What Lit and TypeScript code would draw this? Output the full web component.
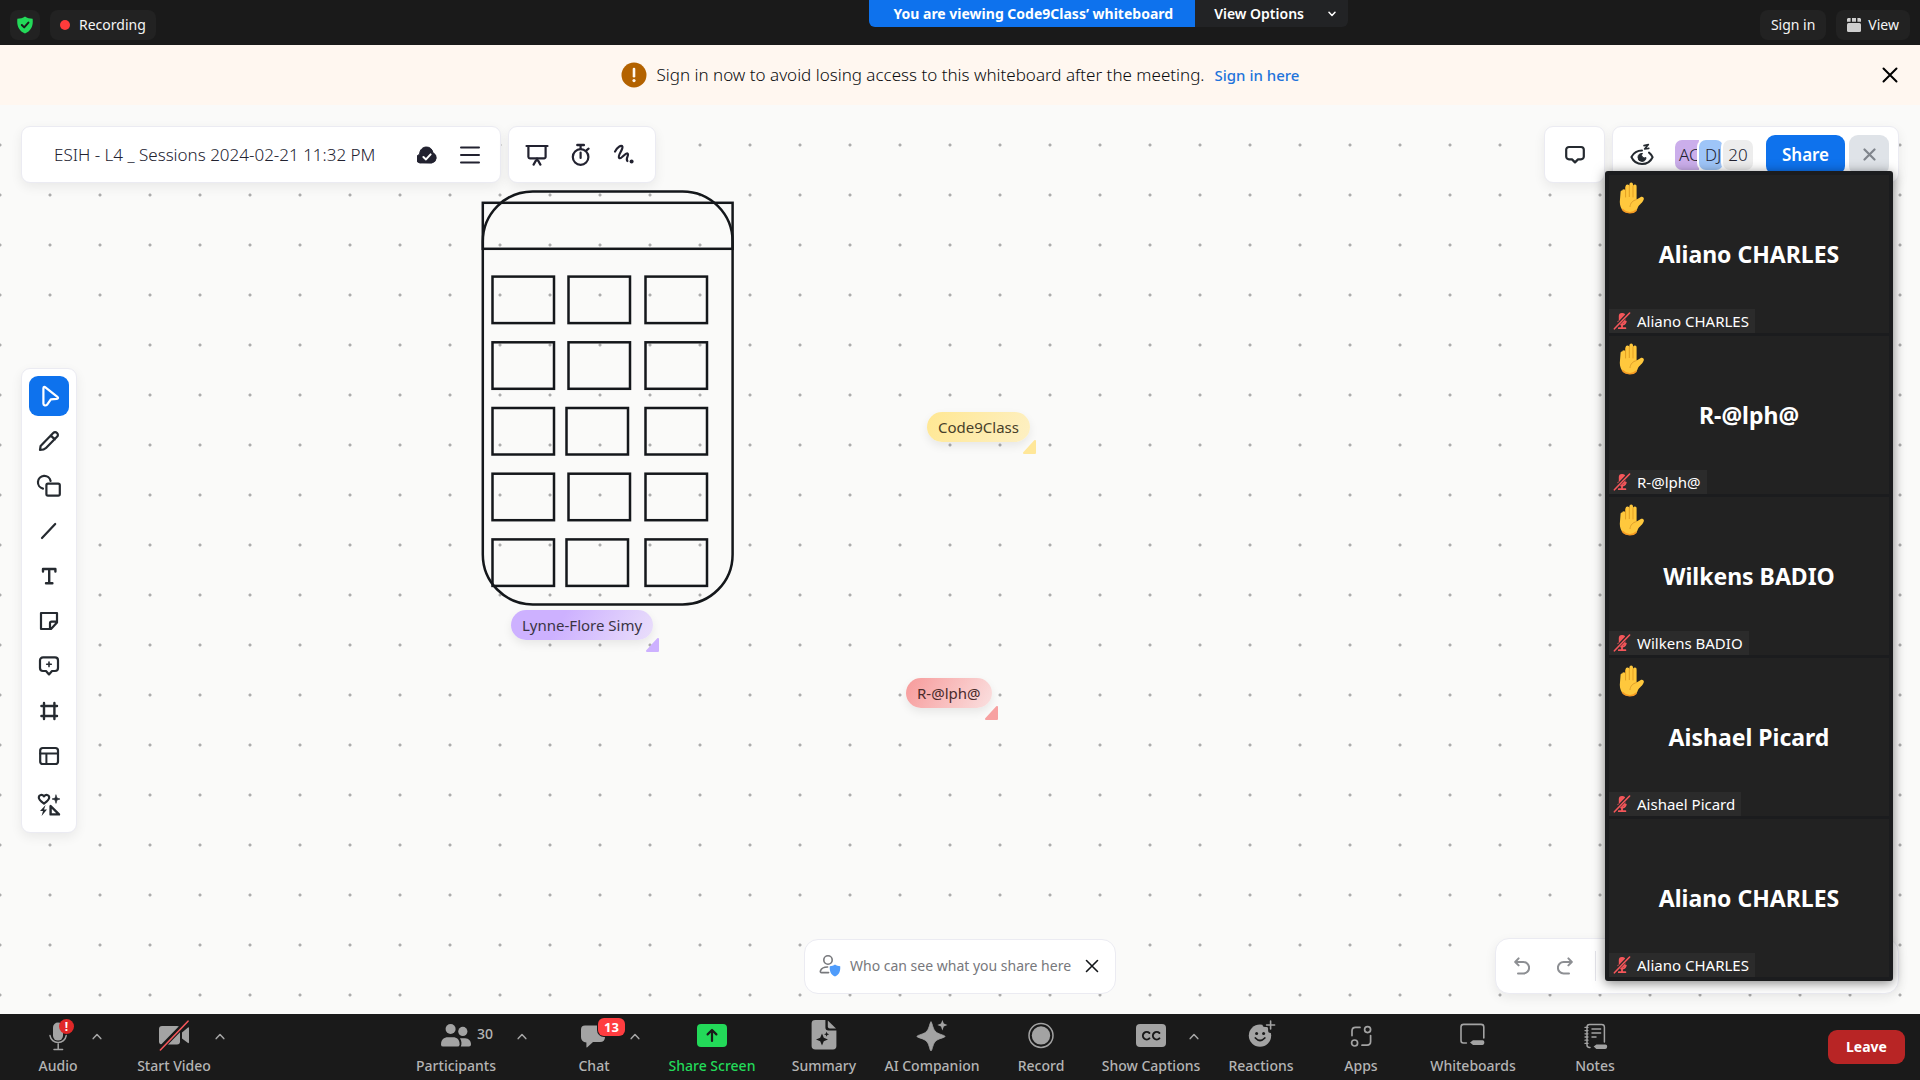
import { LitElement, html, css, svg, nothing, TemplateResult, SVGTemplateResult } from "lit";
import { customElement, property } from "lit/decorators.js";
import { classMap } from "lit/directives/class-map.js";

/** Wraps icon strokes in an svg element of the given size. */
const icon = (w: number, h: number, body: SVGTemplateResult, cls = ""): TemplateResult => html`<svg
  class="icon ${cls}" width=${w} height=${h} viewBox="0 0 ${w} ${h}" fill="none"
  stroke-linecap="round" stroke-linejoin="round" aria-hidden="true">${body}</svg>`;

const shield = icon(16, 18, svg`
  <path d="M8 .5 C10 2 13 2.6 15.6 2.8 C16.4 9 14.6 14.6 8 17.6 C1.4 14.6 -.4 9 .4 2.8 C3 2.6 6 2 8 .5Z" fill="#23d959"/>
  <path d="M4.8 9 L7.2 11.4 L11.4 6.6" stroke="#1a1a1a" stroke-width="2"/>`);

const viewGrid = icon(14, 14, svg`
  <rect x="0" y="5" width="14" height="9" rx="1.5" fill="#cfcfcf"/>
  <path d="M1 0H3.6V3.8H0V1Z M5 0H9V3.8H5Z M10.4 0H13L14 1V3.8H10.4Z" fill="#cfcfcf"/>`);

const chevronDown = icon(8, 6, svg`<path d="M1 1.2 L4 4.4 L7 1.2" stroke="#fff" stroke-width="1.5"/>`);
const caretUp = icon(10, 7, svg`<path d="M1.2 5.6 L5 1.6 L8.8 5.6" stroke="#a6a6a6" stroke-width="1.5"/>`);

const warning = icon(26, 26, svg`
  <circle cx="13" cy="13" r="12.5" fill="#b36200"/>
  <path d="M13 7V14.2" stroke="#fff8f0" stroke-width="2.6"/>
  <circle cx="13" cy="18.6" r="1.6" fill="#fff8f0"/>`);

const cross = (size: number, colour: string, width: number) => icon(size, size, svg`
  <path d="M1.5 1.5 L${size - 1.5} ${size - 1.5} M${size - 1.5} 1.5 L1.5 ${size - 1.5}" stroke=${colour} stroke-width=${width}/>`);

const cloud = icon(20, 18, svg`
  <path d="M4.6 17 A4.4 4.4 0 0 1 2.6 8.4 C2.6 3.6 6 1 9.4 1 C12.6 1 15.4 3 16 6.8 A5.4 5.4 0 0 1 15 17Z" fill="#222230" stroke="#222230"/>
  <path d="M6.4 11 L9 13.4 L13.6 8.4" stroke="#fff" stroke-width="2"/>`);

const burger = icon(20, 18, svg`<path d="M1 1.5H19 M1 9H19 M1 16.5H19" stroke="#222230" stroke-width="2"/>`);

const present = icon(24, 22, svg`
  <g stroke="#222230" stroke-width="2.2">
    <path d="M1.5 2H22.5"/><path d="M3.4 2V13 A1.5 1.5 0 0 0 4.9 14.4H19 A1.5 1.5 0 0 0 20.6 13V2"/>
    <path d="M12 14.6V16.4 M8.6 20.6 L11 16.4H13 L15.4 20.6"/>
  </g>`);

const timer = icon(20, 24, svg`
  <g stroke="#222230" stroke-width="2.2">
    <circle cx="9.6" cy="14" r="7.8"/><path d="M6.4 2H12.8" stroke-width="2.6"/><path d="M9.6 3V6 M9.6 9.6V15 M15.4 7.4 L17.6 5.6"/>
  </g>`);

const laser = icon(22, 22, svg`
  <path d="M2 7.6 C4 3.4 8.6 .4 9.4 2.6 C10.4 5.4 4 11.6 6.2 14 C8.2 16 12.6 8 14.6 9.6 C16.4 11 12.2 14.6 14.4 17" stroke="#222230" stroke-width="2.2"/>
  <circle cx="18.6" cy="17.6" r="2" fill="#222230"/>`);

const comment = icon(20, 20, svg`
  <path d="M4 2H16 A2.8 2.8 0 0 1 18.8 4.8V11.6 A2.8 2.8 0 0 1 16 14.4H13 L10 17.4 L7 14.4H4 A2.8 2.8 0 0 1 1.2 11.6V4.8 A2.8 2.8 0 0 1 4 2Z" stroke="#252a30" stroke-width="2.2"/>`);

const eye = icon(24, 24, svg`
  <path d="M12 7.6 C7.2 7.6 3.4 10.4 1.4 14 C3.4 18.4 7.4 21 12 21 C16.6 21 20.6 18.4 22.6 14.2 C21.6 12 20.4 10.6 19 9.6" stroke="#252a30" stroke-width="2"/>
  <path d="M12 10.4 A4 4 0 1 0 16 14.6 A3 3 0 0 1 12 10.4Z" fill="#252a30" stroke="#252a30"/>
  <path d="M14 2.6 L18.4 1.6 L14.6 6 L18.8 5.4" stroke="#252a30" stroke-width="1.6"/>`);

const ink = "#252a30";
const tools: { name: string; glyph: TemplateResult }[] = [
  { name: "Select", glyph: icon(24, 24, svg`
    <path d="M6.4 4.4 C6.4 3 7.4 2.6 8.4 3.4 L20.4 12.8 C21.6 13.8 21 14.8 19.8 14.9 L13.8 15.4 L10 20.8 C8.8 22 6.4 21.6 6.4 19.8Z" stroke="#fff" stroke-width="2.2"/>`) },
  { name: "Pen", glyph: icon(24, 24, svg`
    <path d="M3 21 L3.6 17 L16.2 4 C17.4 2.8 18.8 2.8 20 4 C21.2 5.2 21.2 6.6 20 7.8 L9 19 C7.4 20.6 5.6 21 3 21Z M13.6 6.4 L17.8 10.4" stroke=${ink} stroke-width="2.2"/>`) },
  { name: "Shapes", glyph: icon(26, 24, svg`
    <path d="M7 14.6 A6.4 6.4 0 1 1 14.6 7" stroke=${ink} stroke-width="2.2"/>
    <rect x="10.4" y="9.6" width="13.4" height="12" rx="1.6" stroke=${ink} stroke-width="2.2"/>`) },
  { name: "Line", glyph: icon(24, 24, svg`<path d="M5 19 L18.2 5" stroke=${ink} stroke-width="2.2"/>`) },
  { name: "Text", glyph: icon(24, 24, svg`<path d="M6 7.6V5H18.4V7.6 M12.2 5V19.2 M9 19.2H15.4" stroke=${ink} stroke-width="2.4"/>`) },
  { name: "Sticky note", glyph: icon(24, 24, svg`
    <path d="M4 4H20V13.4 L14 20H4Z M20 12.6H14.6 A1.6 1.6 0 0 0 13 14.2V19.4" stroke=${ink} stroke-width="2.2"/>`) },
  { name: "Comment", glyph: icon(24, 24, svg`
    <path d="M6 3.4H18 A3 3 0 0 1 21 6.4V14 A3 3 0 0 1 18 17H15 L12 20.4 L9 17H6 A3 3 0 0 1 3 14V6.4 A3 3 0 0 1 6 3.4Z" stroke=${ink} stroke-width="2.2"/>
    <path d="M12 8V12.6 M9.7 10.3H14.3" stroke=${ink} stroke-width="1.6"/>`) },
  { name: "Frame", glyph: icon(24, 24, svg`<path d="M7 4V20 M17.4 4V20 M4.4 7H20 M4.4 17H20" stroke=${ink} stroke-width="2.4"/>`) },
  { name: "Table", glyph: icon(24, 24, svg`
    <rect x="3.2" y="4" width="17.8" height="16" rx="2.6" stroke=${ink} stroke-width="2.2"/>
    <path d="M3.2 9.4H21 M9.4 9.4V20" stroke=${ink} stroke-width="2"/>`) },
  { name: "More", glyph: icon(26, 26, svg`
    <path d="M8 11.6 C5 9.6 2.6 7.8 2.8 5.2 C3 2.8 6.2 2 8 4.4 C9.8 2 13 2.8 13.2 5.2 C13.4 7.8 11 9.6 8 11.6Z" stroke=${ink} stroke-width="2.2"/>
    <path d="M20 3 L21 6 L24 7 L21 8 L20 11.4 L19 8 L16 7 L19 6Z" fill=${ink} stroke=${ink} stroke-width=".6"/>
    <path d="M9.6 13 L4 19 H7 L5.6 24 L11 17.6H8Z" fill=${ink}/>
    <path d="M14.6 14 V22.4 H23Z" stroke=${ink} stroke-width="2.4"/>`) },
];

const undo = icon(16, 18, svg`<path d="M4.6 1.4 L1.2 5 L4.6 8.4 M1.6 5H9.4 A5.4 5.4 0 0 1 9.4 16.4H4" stroke="#8d8f93" stroke-width="2"/>`);
const redo = icon(16, 18, svg`<path d="M11.4 1.4 L14.8 5 L11.4 8.4 M14.4 5H6.6 A5.4 5.4 0 0 0 6.6 16.4H12" stroke="#8d8f93" stroke-width="2"/>`);

const privacy = icon(22, 24, svg`
  <circle cx="9" cy="6" r="4.2" stroke="#77787c" stroke-width="1.6"/>
  <path d="M9.6 18.6H2.6 C1.4 18.6 1.2 17.8 1.4 17 C2.2 14.4 4.6 13 8.6 13" stroke="#77787c" stroke-width="1.6"/>
  <path d="M16 10.4 C17.4 11.6 19.4 12 21.2 12.2 C21.6 16.8 20.4 20.6 16 22.4 C11.6 20.6 10.4 16.8 10.8 12.2 C12.6 12 14.6 11.6 16 10.4Z" fill="#4f9cfb"/>`);

const hand = icon(26, 32, svg`
  <path d="M3 9 A1.8 1.8 0 0 1 6.6 9V4.4 A1.9 1.9 0 0 1 10.4 4.2 V2.4 A1.8 1.8 0 0 1 14 2.4V4 A1.8 1.8 0 0 1 17.6 4.4V17.6 L21.4 15.2 C23 14.2 25.4 15.2 24.8 17.2 C23.6 21 20.4 22.2 18.8 25.4 C17.4 29.4 15.2 31 11 31 C5.6 31 1 28 .8 20 L1.6 9.4 A1.4 1.4 0 0 1 3 8.4Z" fill="#ffc83d"/>
  <path d="M6.6 5V15 M10.3 4V14.6 M14 4V15" stroke="#e39f22" stroke-width="1"/>
  <path d="M17.4 17.6 C13.4 18.6 11.4 21 11 24.6" stroke="#e0a02a" stroke-width="1"/>
  <path d="M3.6 27.6 C7 31.6 14 31.6 17 28.4" stroke="#f59a23" stroke-width="1.6"/>`);

const mutedMic = icon(18, 18, svg`
  <rect x="5.8" y="1" width="6.6" height="10.6" rx="3" fill="#f5565a"/>
  <path d="M9 11V15.6 M5.8 16.2H12.4" stroke="#f5565a" stroke-width="1.8"/>
  <path d="M5.4 9.6 A3.8 3.8 0 0 0 12.8 9.6" stroke="#f5565a" stroke-width="1.8"/>
  <path d="M1.2 16.4 L16 1" stroke="#2b2b2b" stroke-width="3.4"/>
  <path d="M1.4 16.8 L16.6 1" stroke="#f5565a" stroke-width="1.6"/>`);

const g = "#a3a3a3";
const bar = {
  audio: icon(32, 34, svg`
    <rect x="11" y="5.6" width="10" height="18" rx="5" fill=${g}/>
    <path d="M8 18.6 A8.2 8.2 0 0 0 24.2 18.6 M16.2 27V32 M12 32.4H20.6" stroke=${g} stroke-width="1.5"/>`),
  video: icon(32, 34, svg`
    <rect x="1" y="9" width="21" height="18.6" rx="3" fill=${g}/>
    <path d="M24 15.4 L30 10.4 Q31 10 31 11.4V25 Q31 26.6 30 26 L24 21.4Z" fill=${g}/>
    <path d="M1.6 32.6 L30 3.6" stroke="#1a1a1a" stroke-width="5"/>
    <path d="M2.4 33 L30 4.2" stroke="#f5565a" stroke-width="1.6"/>`),
  people: icon(32, 34, svg`
    <circle cx="10.6" cy="12" r="5" fill=${g}/><circle cx="22.8" cy="14.4" r="4.6" fill=${g}/>
    <path d="M1 27.4 C1 22.6 4 20.2 8 20.2H13 C17 20.2 19.6 22.6 19.6 27.4 Q19.6 29.6 17.4 29.6H3.2 Q1 29.6 1 27.4Z" fill=${g}/>
    <path d="M20 21.2 H25 C29 21.4 31 24 31 27.6 Q31 29.6 29 29.6H20.8 C21.8 27 21.8 24 20 21.2Z" fill=${g}/>`),
  chat: icon(32, 34, svg`
    <path d="M7 8.4H22 Q27 8.4 27 13.4V20 Q27 25 22 25H15 L9 30.4 Q8.4 30.8 8.4 29.8V25.4 Q3 25 3 20V12.4 Q3 8.4 7 8.4Z" fill=${g}/>`),
  share: icon(32, 34, svg`
    <rect x="1" y="7" width="30" height="23" rx="4" fill="#23d959"/>
    <path d="M16 24V13.4 M11.6 17.4 L16 13 L20.4 17.4" stroke="#1a1a1a" stroke-width="2.2"/>`),
  summary: icon(32, 34, svg`
    <path d="M7.4 3H17.4 V10.4 Q17.4 13.4 20.4 13.4H28.4V29 Q28.4 32.4 25 32.4H7.4 Q3.6 32.4 3.6 29V6.4 Q3.6 3 7.4 3Z" fill=${g}/>
    <path d="M19.8 3.6 L28 11.4H21.8 Q19.8 11.4 19.8 9.4Z" fill=${g}/>
    <path d="M14 16.6 L15.8 20.8 L20 22.4 L15.8 24.2 L14 28.4 L12.2 24.2 L8 22.4 L12.2 20.8Z" fill="#1a1a1a"/>
    <path d="M18.6 14.6 L19.3 16.5 L21.2 17.2 L19.3 18 L18.6 19.8 L17.9 18 L16 17.2 L17.9 16.5Z" fill="#1a1a1a"/>`),
  companion: icon(32, 34, svg`
    <path d="M15 5 C16.2 5 16.4 10.6 19 14 C21.6 17.4 29 18 29 19.4 C29 20.8 21.6 21.4 19 24.8 C16.4 28.2 16.2 33.8 15 33.8 C13.8 33.8 13.6 28.2 11 24.8 C8.4 21.4 1 20.8 1 19.4 C1 18 8.4 17.4 11 14 C13.6 10.6 13.8 5 15 5Z" fill=${g} stroke=${g} stroke-width=".8"/>
    <path d="M26.4 3 L27.8 6.6 L31.4 8 L27.8 9.4 L26.4 13.4 L25 9.4 L21.4 8 L25 6.6Z" fill=${g}/>`),
  record: icon(32, 34, svg`
    <circle cx="16" cy="18.4" r="12" stroke=${g} stroke-width="1.5"/><circle cx="16" cy="18.4" r="9.2" fill=${g}/>`),
  captions: icon(32, 34, svg`
    <rect x="1" y="7" width="30" height="23" rx="4" fill=${g}/>
    <path d="M14.4 16 A3.8 3.8 0 1 0 14.4 21.4 M24.4 16 A3.8 3.8 0 1 0 24.4 21.4" stroke="#1a1a1a" stroke-width="2"/>`),
  reactions: icon(32, 34, svg`
    <circle cx="15" cy="18.6" r="11.2" fill=${g}/>
    <path d="M25.6 2V13.4 M20 7.6H31.4" stroke="#1a1a1a" stroke-width="5"/>
    <path d="M25.6 4V12 M21.6 8H29.6" stroke=${g} stroke-width="1.6"/>
    <circle cx="11.6" cy="16.4" r="1.5" fill="#1a1a1a"/><circle cx="18.6" cy="16.4" r="1.5" fill="#1a1a1a"/>
    <path d="M10.4 21 Q15 26 19.8 21" stroke="#1a1a1a" stroke-width="1.8"/>`),
  apps: icon(32, 34, svg`
    <g stroke=${g} stroke-width="1.7">
      <path d="M7 18.6V14 Q7 10.4 10.6 10.4H15"/><path d="M25.6 18.6V24.6 Q25.6 28.2 22 28.2H17"/>
      <circle cx="22.6" cy="12.6" r="3"/><circle cx="9.6" cy="26" r="3"/>
    </g>`),
  whiteboards: icon(32, 34, svg`
    <path d="M9.4 26H6.4 Q4 26 4 23.6V10 Q4 7.4 6.6 7.4H24 Q26.8 7.4 26.8 10V21" stroke=${g} stroke-width="1.6"/>
    <path d="M13 25.4 L16 23.2H25.6 Q27.4 23.2 27.4 25.6 Q27.4 28 25.6 28H16Z" fill=${g}/>`),
  notes: icon(32, 34, svg`
    <path d="M11 30.4H10.4 Q8 30.4 8 28V10 Q8 7.4 10.6 7.4H22.6 Q25.4 7.4 25.4 10V25" stroke=${g} stroke-width="1.5"/>
    <path d="M6 10.4H9 M6 13.6H9 M6 16.8H9 M6 20H9 M6 23.2H9 M6 26.4H9" stroke=${g} stroke-width="1.3"/>
    <path d="M13 12H21.6 M13 16H21.6 M13 20H17" stroke=${g} stroke-width="1.5"/>
    <path d="M14.6 29.6 L17.4 27.4H26.4 Q28.2 27.4 28.2 29.6 Q28.2 32 26.4 32H17.4Z" fill=${g}/>`),
};

type Action = {
  label: string; glyph: TemplateResult; size: string;
  caret?: "near" | "edge"; count?: string; alert?: string; badge?: string; accent?: boolean;
};

const leftActions: Action[] = [
  { label: "Audio", glyph: bar.audio, size: "w116", caret: "near", alert: "!" },
  { label: "Start Video", glyph: bar.video, size: "w116", caret: "edge" },
];
const centreActions: Action[] = [
  { label: "Participants", glyph: bar.people, size: "w156", caret: "edge", count: "30" },
  { label: "Chat", glyph: bar.chat, size: "w120", caret: "near", badge: "13" },
  { label: "Share Screen", glyph: bar.share, size: "w116", accent: true },
  { label: "Summary", glyph: bar.summary, size: "w108" },
  { label: "AI Companion", glyph: bar.companion, size: "w108" },
  { label: "Record", glyph: bar.record, size: "w110" },
  { label: "Show Captions", glyph: bar.captions, size: "w110", caret: "edge" },
  { label: "Reactions", glyph: bar.reactions, size: "w110" },
  { label: "Apps", glyph: bar.apps, size: "w90" },
  { label: "Whiteboards", glyph: bar.whiteboards, size: "w134" },
  { label: "Notes", glyph: bar.notes, size: "w110" },
];

const people = [
  { name: "Aliano CHARLES", raised: true },
  { name: "R-@lph@", raised: true },
  { name: "Wilkens BADIO", raised: true },
  { name: "Aishael Picard", raised: true },
  { name: "Aliano CHARLES", raised: false },
];

const cursors = [
  { name: "Code9Class", kind: "yellow" },
  { name: "Lynne-Flore Simy", kind: "purple" },
  { name: "R-@lph@", kind: "red" },
];

/** Left edges of the keypad cells, row by row, inside the drawing. */
const keypad = [
  [11, 87, 164], [11, 87, 164], [11, 85, 164], [11, 87, 164], [11, 85, 164],
];

@customElement("participant-tile")
export class ParticipantTile extends LitElement {
  @property() name = "";
  @property({ type: Boolean }) raised = false;

  static styles = css`
    :host { display: grid; height: 158px; background: #222; color: #fff; }
    .name, .hand, .tag { grid-area: 1 / 1; }
    .name { place-self: center; font-size: 23px; line-height: 32px; font-weight: 700; }
    .hand { padding: 7px 10px; }
    .tag {
      place-self: end start; display: flex; align-items: center; gap: 6px;
      height: 24px; padding: 0 6px 0 4px; background: #2b2b2b; font-size: 15px; line-height: 24px;
    }
    .icon { display: block; }
  `;

  render() {
    return html`
      ${this.raised ? html`<div class="hand" role="img" aria-label="Hand raised">${hand}</div>` : nothing}
      <div class="name">${this.name}</div>
      <div class="tag">${mutedMic}<span>${this.name}</span></div>
    `;
  }
}

@customElement("app-root")
export class AppRoot extends LitElement {
  static styles = css`
    :host {
      display: flex; flex-direction: column; min-height: 100vh; position: relative;
      font-family: "Noto Sans", "Open Sans", sans-serif; font-size: 14px; line-height: 20px;
      background: #fafaf9; color: #222230;
    }
    * { box-sizing: border-box; }
    button { font: inherit; color: inherit; border: 0; padding: 0; margin: 0; background: none; }
    h1 { margin: 0; font-weight: 400; }
    .icon { display: block; flex: none; }

    .top { display: grid; grid-template-columns: 38fr auto 25fr; height: 45px; background: #1a1a1a; color: #f5f5f5; }
    .top-side { display: flex; align-items: center; gap: 10px; padding: 5px 10px 0; }
    .top-end { justify-content: flex-end; }
    .chip { display: flex; align-items: center; gap: 7px; height: 30px; padding: 0 11px; border-radius: 8px; background: #222; }
    .chip-shield { padding: 0 7px; }
    .dot { width: 10px; height: 10px; border-radius: 50%; background: #ff3b3b; }
    .recording { padding: 0 10px; gap: 9px; }
    .viewing { display: flex; height: 27px; font-weight: 700; line-height: 27px; color: #fff; }
    .viewing-name { padding: 0 22px 0 24px; background: #0e72ed; border-bottom-left-radius: 6px; }
    .viewing-menu { display: flex; align-items: center; gap: 24px; padding: 0 12px 0 19px; font-weight: 600; background: #222325; border-bottom-right-radius: 6px; }

    .notice { display: grid; grid-template-columns: 1fr auto 1fr; align-items: center; height: 60px; background: #fff7f0; color: #0a0c0e; }
    .notice-body { grid-column: 2; display: flex; align-items: center; gap: 10px; font-size: 17px; line-height: 24px; font-weight: 300; }
    .notice-body a { font-size: 15px; font-weight: 500; color: #1f74db; text-decoration: none; }
    .notice-close { justify-self: end; padding: 8px 22px; }

    .board {
      flex: 1; position: relative; display: grid; grid-template-rows: auto 1fr auto; padding: 21px 21px 20px;
      background: radial-gradient(circle, #acacac 1px, transparent 2px) -25px 15px / 50px 50px, #fafaf9;
    }
    .panel { display: flex; align-items: center; background: #fff; border: 1px solid #ebebf2; border-radius: 9px; box-shadow: 0 4px 12px rgba(0, 0, 0, 0.07); z-index: 1; }
    .bar { display: flex; gap: 7px; }
    .bar .panel { height: 57px; }
    .title { padding: 0 20px 0 32px; gap: 21px; }
    .title h1 { font-size: 17px; line-height: 24px; font-weight: 300; width: 342px; }
    .title-icons { display: flex; align-items: center; gap: 23px; }
    .session { padding: 0 20px 0 16px; gap: 22px; }
    .spacer { flex: 1; }
    .comments { padding: 0 19px 0 20px; }
    .sharing { padding: 0 9px 0 17px; }
    .avatars { display: flex; padding: 0 13px 0 21px; font-size: 17px; line-height: 30px; font-weight: 300; }
    .avatar { width: 24px; height: 30px; padding-left: 4px; overflow: hidden; border-radius: 7px 0 0 7px; }
    .avatar-violet { background: #cbaeeb; }
    .avatar-blue { background: #9ec5f8; box-shadow: -1px 0 0 1px #fff; padding-left: 6px; border-radius: 7px; }
    .avatar-more { width: 30px; padding: 0; text-align: center; background: #ededed; box-shadow: -1px 0 0 1px #fff; border-radius: 7px; }
    .share { width: 79px; height: 40px; border-radius: 9px; background: #0e72ed; color: #fff; font-size: 17px; font-weight: 600; }
    .exit { display: grid; place-items: center; width: 40px; height: 40px; margin-left: 4px; border-radius: 9px; background: #dfe3e8; }

    .tools { flex-direction: column; gap: 5px; align-self: center; justify-self: start; margin-top: 80px; padding: 7px; }
    .tool { display: grid; place-items: center; width: 40px; height: 40px; border-radius: 9px; }
    .tool:last-child { margin-top: 4px; }
    .tool-active { background: #0e72ed; }

    .foot { display: grid; grid-template-columns: 1fr auto 1fr; align-items: center; }
    .hint { grid-column: 2; height: 55px; padding: 0 16px 0 14px; border-radius: 14px; box-shadow: none; color: #77787c; gap: 9px; }
    .hint button { padding: 0 0 0 5px; }
    .history { justify-self: end; width: 404px; height: 56px; border-radius: 14px; padding-left: 18px; gap: 27px; }
    .history .rule { width: 1px; height: 30px; margin-left: -5px; background: #e4e4ea; }

    .drawing { position: absolute; left: 480px; top: 84px; }
    .cursor { position: absolute; }
    .cursor-name { display: block; height: 30px; padding: 0 11px; border-radius: 15px; font-size: 15px; line-height: 30px; color: #3a3444; box-shadow: 0 4px 10px rgba(0, 0, 0, 0.08); }
    .cursor .icon { position: absolute; right: -7px; top: 28px; }
    .yellow { left: 927px; top: 307px; color: #ffe799; }
    .yellow .cursor-name { background: linear-gradient(120deg, #ffe792, #fdf0c4); color: #474029; }
    .purple { left: 511px; top: 505px; color: #cdb1ff; }
    .purple .cursor-name { background: linear-gradient(120deg, #cdb1ff 35%, #eadffb); }
    .red { left: 906px; top: 573px; color: #f7a1a1; }
    .red .cursor-name { background: linear-gradient(120deg, #f79a9a, #fae0e0); color: #4a2b2b; }

    .videos {
      position: absolute; z-index: 2; top: 171px; right: 27px; width: 288px; padding: 4px; display: grid; gap: 3px;
      background: #1b1c1e; border-radius: 3px; box-shadow: 0 2px 12px rgba(0, 0, 0, 0.5);
    }

    .controls { display: flex; height: 66px; background: #1a1a1a; color: #b4b4b4; }
    .controls-start { flex: 7; display: flex; }
    .controls-centre { display: flex; }
    .controls-end { flex: 5; display: flex; justify-content: flex-end; align-items: center; }
    .cell { display: grid; }
    .action, .caret { grid-area: 1 / 1; }
    .action { display: grid; grid-template-columns: 1fr auto 1fr; grid-template-rows: 34px 20px; row-gap: 3px; padding-top: 5px; align-content: start; font-weight: 500; }
    .glyph { position: relative; grid-column: 2; justify-self: center; margin-top: -2px; }
    .count { grid-column: 3; justify-self: start; margin: 5px 0 0 5px; }
    .label { grid-column: 1 / -1; grid-row: 2; justify-self: center; white-space: nowrap; }
    .caret { place-self: start end; padding: 3px; margin: 16px 4px 0 0; }
    .caret-near { margin-right: 11px; }
    .accent { color: #23d959; }
    .alert { position: absolute; left: 17px; top: 2px; width: 15px; height: 15px; border-radius: 50%; background: #e02828; color: #fff; font-size: 12px; line-height: 15px; font-weight: 700; text-align: center; }
    .badge { position: absolute; left: 20px; top: 1px; width: 27px; height: 18px; border-radius: 6px; background: #ff3d40; color: #fff; font-weight: 700; font-size: 13px; line-height: 18px; text-align: center; box-shadow: 0 0 0 1px #1a1a1a; }
    .leave { width: 77px; height: 34px; margin-right: 15px; border-radius: 9px; background: #b82525; color: #fff; font-weight: 700; }
    .w90 { width: 90px; } .w108 { width: 108px; } .w110 { width: 110px; } .w116 { width: 116px; }
    .w120 { width: 120px; } .w134 { width: 134px; } .w156 { width: 156px; }
  `;

  private renderAction(a: Action) {
    return html`<div class="cell ${a.size}">
      <button class=${classMap({ action: true, accent: !!a.accent })}>
        <span class="glyph">${a.glyph}
          ${a.alert ? html`<span class="alert">${a.alert}</span>` : nothing}
          ${a.badge ? html`<span class="badge">${a.badge}</span>` : nothing}
        </span>
        ${a.count ? html`<span class="count">${a.count}</span>` : nothing}
        <span class="label">${a.label}</span>
      </button>
      ${a.caret
        ? html`<button class=${classMap({ caret: true, "caret-near": a.caret === "near" })} aria-label="${a.label} options">${caretUp}</button>`
        : nothing}
    </div>`;
  }

  private renderDrawing() {
    return html`<svg class="drawing" width="256" height="424" viewBox="0 0 256 424" fill="none" stroke="#14171b" stroke-width="2.5" role="img" aria-label="Phone sketch">
      <rect x="2.8" y="2.4" width="249.8" height="413" rx="50"/>
      <rect x="2.8" y="13.8" width="249.8" height="46"/>
      ${keypad.map((row, r) => row.map((x) => svg`<rect x=${x + 1.5} y=${87.6 + r * 65.7} width="61.5" height="46.5"/>`))}
    </svg>`;
  }

  render() {
    return html`
      <header class="top">
        <div class="top-side">
          <button class="chip chip-shield" aria-label="Meeting information">${shield}</button>
          <button class="chip recording"><span class="dot"></span>Recording</button>
        </div>
        <div class="viewing">
          <div class="viewing-name">You are viewing Code9Class’ whiteboard</div>
          <button class="viewing-menu">View Options ${chevronDown}</button>
        </div>
        <div class="top-side top-end">
          <button class="chip">Sign in</button>
          <button class="chip">${viewGrid}View</button>
        </div>
      </header>

      <section class="notice">
        <div class="notice-body">
          ${warning}<span>Sign in now to avoid losing access to this whiteboard after the meeting.</span>
          <a href="#sign-in">Sign in here</a>
        </div>
        <button class="notice-close" aria-label="Dismiss">${cross(16, "#000", 2)}</button>
      </section>

      <main class="board">
        ${this.renderDrawing()}
        ${cursors.map((c) => html`<div class="cursor ${c.kind}">
          <span class="cursor-name">${c.name}</span>
          ${icon(15, 14, svg`<path d="M13 1 V13 H2Z" fill="currentColor" stroke="currentColor" stroke-width="2"/>`)}
        </div>`)}

        <div class="bar">
          <div class="panel title">
            <h1>ESIH - L4 _ Sessions 2024-02-21 11:32 PM</h1>
            <div class="title-icons">
              <span role="img" aria-label="Saved">${cloud}</span>
              <button aria-label="Menu">${burger}</button>
            </div>
          </div>
          <div class="panel session">
            <button aria-label="Present">${present}</button>
            <button aria-label="Timer">${timer}</button>
            <button aria-label="Laser pointer">${laser}</button>
          </div>
          <span class="spacer"></span>
          <button class="panel comments" aria-label="Comments">${comment}</button>
          <div class="panel sharing">
            <button aria-label="Follow">${eye}</button>
            <div class="avatars">
              <span class="avatar avatar-violet">AC</span>
              <span class="avatar avatar-blue">DJ</span>
              <span class="avatar avatar-more">20</span>
            </div>
            <button class="share">Share</button>
            <button class="exit" aria-label="Close whiteboard">${cross(13, "#80858c", 2.2)}</button>
          </div>
        </div>

        <nav class="panel tools" aria-label="Drawing tools">
          ${tools.map((t, i) => html`<button class=${classMap({ tool: true, "tool-active": i === 0 })} aria-label=${t.name}>${t.glyph}</button>`)}
        </nav>

        <div class="foot">
          <div class="panel hint">
            ${privacy}<span>Who can see what you share here</span>
            <button aria-label="Dismiss hint">${cross(14, "#131619", 1.6)}</button>
          </div>
          <div class="panel history">
            <button aria-label="Undo">${undo}</button>
            <button aria-label="Redo">${redo}</button>
            <span class="rule"></span>
          </div>
        </div>
      </main>

      <aside class="videos" aria-label="Participants video">
        ${people.map((p) => html`<participant-tile .name=${p.name} .raised=${p.raised}></participant-tile>`)}
      </aside>

      <footer class="controls">
        <div class="controls-start">${leftActions.map((a) => this.renderAction(a))}</div>
        <div class="controls-centre">${centreActions.map((a) => this.renderAction(a))}</div>
        <div class="controls-end"><button class="leave">Leave</button></div>
      </footer>
    `;
  }
}
